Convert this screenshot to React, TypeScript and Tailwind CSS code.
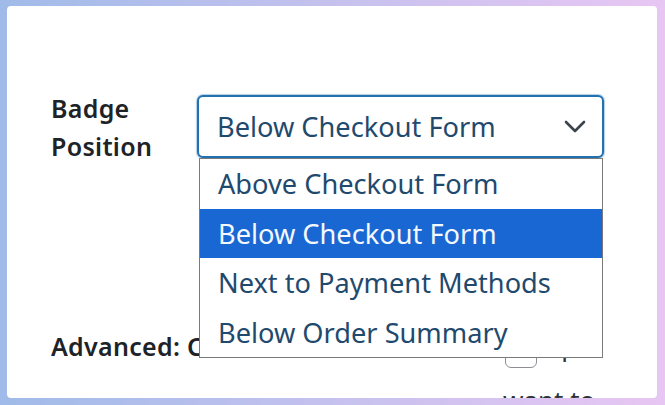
import React from "react"

const options = [
  { label: "Above Checkout Form", h: "h-[50px]" },
  { label: "Below Checkout Form", h: "h-[49px]", active: true },
  { label: "Next to Payment Methods", h: "h-[50px]" },
  { label: "Below Order Summary", h: "h-[49px]" },
]

function Chevron() {
  return (
    <svg width="22" height="13" viewBox="0 0 22 13" fill="none">
      <polyline
        points="2,2 11,11 20,2"
        stroke="#3c434a"
        strokeWidth="2.6"
        strokeLinecap="round"
        strokeLinejoin="round"
      />
    </svg>
  )
}

function PositionSelect() {
  return (
    <div className="relative z-20 mt-[6px] w-[407px]">
      {/* Closed select, focused */}
      <div className="flex h-[63px] items-center justify-between rounded-[6px] border-2 border-[#2271b1] bg-white pl-[18px] pr-[16px] shadow-[0_0_1px_1px_rgba(34,113,177,0.35)]">
        <span className="text-[27.2px] leading-none text-[#1f4a6e]">Below Checkout Form</span>
        <Chevron />
      </div>

      {/* Open option list */}
      <div className="absolute left-[2px] top-full z-20 w-[404px] border border-[#7a7a7a] bg-white">
        {options.map(o => (
          <div
            key={o.label}
            className={`flex items-center pl-[18px] text-[27.2px] leading-none ${o.h} ${
              o.active ? "bg-[#1967d2] text-[#f4f8ff]" : "bg-white text-[#1f4a6e]"
            }`}
          >
            {o.label}
          </div>
        ))}
      </div>
    </div>
  )
}

export default function App() {
  return (
    <div className="h-[405px] w-[665px] bg-linear-to-r from-[#a0bbe9] to-[#e8c6f3] pb-[7px] pl-[7px] pr-[8px] pt-[6px] font-['Noto_Sans',sans-serif]">
      <div className="relative isolate h-full overflow-hidden rounded-[4px] bg-white pl-[44px] pt-[83px]">
        {/* Badge position row */}
        <div className="relative z-20 flex items-start">
          <div className="w-[146px] text-[25px] font-semibold leading-[38px] tracking-[0.3px] text-[#1d2327]">
            Badge
            <br />
            Position
          </div>
          <PositionSelect />
        </div>

        {/* Advanced row, partly under the open list */}
        <div className="relative z-0 mt-[162px] flex items-start">
          <div className="w-[452px] shrink-0 overflow-hidden whitespace-nowrap text-[25px] font-semibold leading-[38px] tracking-[0.3px] text-[#1d2327]">
            Advanced: Custom Placement
          </div>
          <div className="mt-[2px] whitespace-nowrap text-[26px] leading-[42px] text-[#2c3338]">
            <div className="flex h-[46px] items-start">
              <span className="ml-[2px] mr-[4px] mt-[7px] h-[32px] w-[32px] shrink-0 rounded-[6px] border border-[#8c8f94] bg-white" />
              <span className="-mt-[4px]">Opt</span>
            </div>
            <div className="mt-[4px]">want to</div>
          </div>
        </div>
      </div>
    </div>
  )
}
